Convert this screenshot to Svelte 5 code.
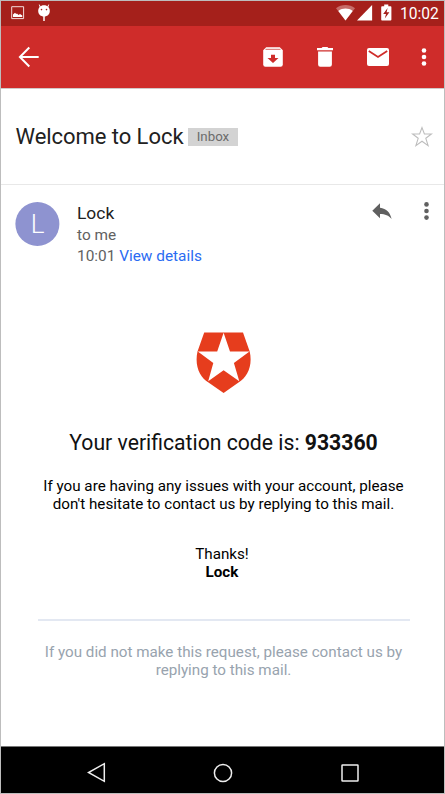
<script>
  const code = '933360';
</script>

<div class="screen">
  <div class="status">
    <svg class="picture" width="14" height="14" viewBox="0 0 14 14"><path d="M.7 .7H12.6V12.6H.7Z" fill="none" stroke="#f3dcda" stroke-width="1"/><path d="M2 11V8.6L4 6.8L5.2 8L6 7.5L7.5 9L9 8L11.3 9.6V11Z" fill="#fff"/></svg>
    <svg class="droid" width="13" height="18" viewBox="0 0 13 18"><path d="M2.2 3L1.3.6M9.8 3L10.7.6" stroke="#fff"/><path d="M6 1.3C9.6 1.3 11.8 3.7 11.8 7C11.8 10.3 9.3 12.5 6 12.5C2.7 12.5.2 10.3.2 7C.2 3.7 2.4 1.3 6 1.3Z" fill="#fff"/><path d="M6 12V17" stroke="#fff" stroke-width="1.5"/><circle cx="3.5" cy="5.6" r=".8" fill="#a5201b"/><circle cx="8.5" cy="5.6" r=".8" fill="#a5201b"/></svg>
    <span class="grow"></span>
    <svg class="wifi" width="19" height="16" viewBox="0 0 19 16"><path d="M0 3.2C5.5-1 13.5-1 19 3.2L9.5 15.6Z" fill="#c66c68"/><path d="M2.3 6C6.5 2.8 12.5 2.8 16.7 6L9.5 15.6Z" fill="#fff"/></svg>
    <svg class="signal" width="16" height="16" viewBox="0 0 16 16"><path d="M15.1 0V15.4H0Z" fill="#fff"/></svg>
    <svg class="battery" width="11" height="17" viewBox="0 0 11 17"><path d="M3.2.6H7.3V2.3H9.6Q10.4 2.3 10.4 3.2V15.6Q10.4 16.5 9.5 16.5H1Q.2 16.5.2 15.6V3.2Q.2 2.3 1 2.3H3.2Z" fill="#fff"/><path d="M6.6 4L2.2 10H5L3.8 14.4L8.4 8.3H5.6Z" fill="#a5201b"/></svg>
    <span class="clock">10:02</span>
  </div>

  <div class="appbar">
    <svg width="22" height="22" viewBox="0 0 22 22" fill="none" stroke="#fff" stroke-width="2"><path d="M20.7 11H2M11.3 1.5L1.9 11L11.3 20.5"/></svg>
    <span class="grow"></span>
    <svg class="archive" width="20" height="20" viewBox="0 0 20 20"><path d="M3.2.3H16.8L19.8 3.3V17.6Q19.8 19.8 17.6 19.8H2.4Q.2 19.8.2 17.6V3.3Z" fill="#fff"/><path d="M2.5 2.3H17.5" stroke="#d76461" stroke-width="1"/><path d="M8 7.8H12V11H15.5L10 16L4.5 11H8Z" fill="#cf2c2a"/></svg>
    <svg class="trash" width="16" height="20" viewBox="0 0 16 20" fill="#fff"><path d="M0 1H4.6L5.6 0H10.4L11.4 1H16V3.3H0ZM1.1 4.5H14.9V17.6Q14.9 19.8 12.7 19.8H3.3Q1.1 19.8 1.1 17.6Z"/></svg>
    <svg class="mail" width="22" height="18" viewBox="0 0 22 18"><rect width="22" height="18" rx="2" fill="#fff"/><path d="M1.8 3L11 9L20.2 3" fill="none" stroke="#cf2c2a" stroke-width="1.8"/></svg>
    <svg class="more" width="6" height="20" viewBox="0 0 6 20" fill="#fff"><circle cx="3" cy="3.5" r="2.3"/><circle cx="3" cy="10" r="2.3"/><circle cx="3" cy="16.5" r="2.3"/></svg>
  </div>

  <div class="subject">
    <span class="title">Welcome to Lock</span>
    <span class="tag">Inbox</span>
    <span class="grow"></span>
    <svg width="22" height="22" viewBox="0 0 22 22" fill="none" stroke="#bdbdbd" stroke-width="1.1"><path d="M11 1.6L13.4 8H20.4L14.8 12.3L17.1 19.7L11 15.3L4.9 19.7L7.2 12.3L1.6 8H8.6Z"/></svg>
  </div>

  <div class="sender">
    <div class="avatar">
      <svg width="45" height="44" viewBox="0 0 45 44"><circle cx="22.4" cy="22" r="22" fill="#8e93d0"/></svg>
      <span>L</span>
    </div>
    <div class="who">
      <div class="name">Lock</div>
      <div class="to">to me</div>
      <div class="when">10:01 <a href="#details">View details</a></div>
    </div>
    <span class="grow"></span>
    <svg class="reply" width="20" height="17" viewBox="0 0 20 17"><path d="M8 .3V4.7C14.5 5.4 18.3 9.5 19.6 16C16.7 12.3 13.2 10.9 8 10.9V15.2L.3 7.8Z" fill="#606060"/></svg>
    <svg class="dots" width="6" height="20" viewBox="0 0 6 20" fill="#606060"><circle cx="2.5" cy="3.4" r="2.3"/><circle cx="2.5" cy="10" r="2.3"/><circle cx="2.5" cy="16.6" r="2.3"/></svg>
  </div>

  <div class="mail-body">
    <svg class="logo" width="56" height="62" viewBox="0 0 56 62"><path d="M8.2.5H47L53.7 19.5C57 34 51 45.5 42.5 50.5L27.6 61L12.5 50.5C4 45.5-1.7 34 1.5 19.5Z" fill="#e63d1d"/><path d="M27.6 .7L34 19.4H53.5L37.9 31L43.3 49.3L27.6 38.3L12.2 49.3L17.3 31L1.8 19.4H21.2Z" fill="#fff"/></svg>
    <div class="code">Your verification code is: <b>{code}</b></div>
    <div class="copy issues">If you are having any issues with your account, please<br />don't hesitate to contact us by replying to this mail.</div>
    <div class="copy thanks">Thanks!<br /><b>Lock</b></div>
    <div class="rule"></div>
    <div class="copy footer">If you did not make this request, please contact us by<br />replying to this mail.</div>
  </div>

  <div class="nav">
    <svg class="back" width="19" height="21" viewBox="0 0 19 21"><path d="M17.3 1.7V19.3L1.5 10.5Z" fill="none" stroke="#eee" stroke-width="1.5"/></svg>
    <svg class="home" width="20" height="20" viewBox="0 0 20 20"><circle cx="10" cy="10" r="8.6" fill="none" stroke="#eee" stroke-width="1.5"/></svg>
    <svg class="recent" width="18" height="18" viewBox="0 0 18 18"><rect x="1" y="1" width="16" height="16" rx=".5" fill="none" stroke="#eee" stroke-width="1.5"/></svg>
  </div>
</div>

<style>
  .screen {
    box-sizing: border-box;
    width: 445px;
    height: 794px;
    border: 1px solid #bdbdbd;
    background: #fff;
    font-family: Roboto, "Liberation Sans", sans-serif;
    display: flex;
    flex-direction: column;
    overflow: hidden;
  }
  svg { display: block; flex: none; }
  .grow { flex: 1; }
  .status, .appbar, .subject, .sender, .nav { display: flex; flex: none; }
  .status { height: 25px; background: #a5201b; align-items: flex-start; padding: 0 5px 0 10px; }
  .picture { margin-top: 5px; }
  .droid { margin: 3px 0 0 13px; }
  .wifi { margin-top: 4px; }
  .signal { margin: 4px 0 0 2px; }
  .battery { margin: 3px 0 0 8px; }
  .clock { color: #fff; font-size: 15.6px; line-height: 26px; margin-left: 8px; width: 39px; white-space: nowrap; }
  .appbar { height: 63px; background: #cf2c2a; align-items: center; padding: 0 17px; border-bottom: 1px solid #d2c8c8; box-sizing: border-box; }
  .archive { margin-right: -1px; }
  .trash { margin-left: 35px; }
  .mail { margin-left: 34px; }
  .more { margin-left: 32px; }
  .subject { height: 96px; box-sizing: border-box; border-bottom: 1px solid #e8e8e8; align-items: center; padding: 0 11px 0 14px; }
  .title { font-size: 22px; letter-spacing: -0.05px; color: #212121; white-space: nowrap; width: 172.5px; padding-left: .5px; }
  .tag { width: 50px; height: 18px; background: #d3d3d3; color: #6b6b6b; font-size: 13.3px; line-height: 17px; text-align: center; }
  .sender { height: 147px; padding: 0 14px; box-sizing: border-box; align-items: flex-start; }
  .avatar { display: grid; width: 45px; height: 44px; margin-top: 17px; }
  .avatar > * { grid-area: 1 / 1; }
  .avatar span { color: #fff; font-size: 26px; font-weight: 300; line-height: 44px; text-align: center; }
  .who { margin: 17px 0 0 17px; font-size: 15.4px; line-height: 21px; color: #616161; white-space: nowrap; }
  .name { font-size: 17.4px; color: #212121; line-height: 22px; }
  .to { margin-top: 1px; }
  a { color: #2a6bf2; text-decoration: none; }
  .reply { margin: 18px 32px 0 0; }
  .dots { margin: 16px 0 0; }
  .mail-body { flex: 1; display: flex; flex-direction: column; align-items: center; color: #111; text-align: center; white-space: nowrap; padding-left: 2px; }
  .code { font-size: 21.2px; line-height: 26px; margin-top: 36px; }
  .copy { font-size: 15.2px; line-height: 17.5px; color: #000; }
  .issues { margin-top: 22px; }
  .thanks { margin-top: 33px; padding-right: 3px; }
  .rule { width: 372px; height: 2px; background: #e3e8f2; margin-top: 38px; }
  .copy.footer { color: #98a3ae; margin-top: 23px; }
  .nav { height: 47px; box-sizing: border-box; border-top: 1px solid #777; background: #000; align-items: center; padding: 5px 0 0 86px; }
  .home { margin-left: 107px; }
  .recent { margin-left: 108px; }
</style>
